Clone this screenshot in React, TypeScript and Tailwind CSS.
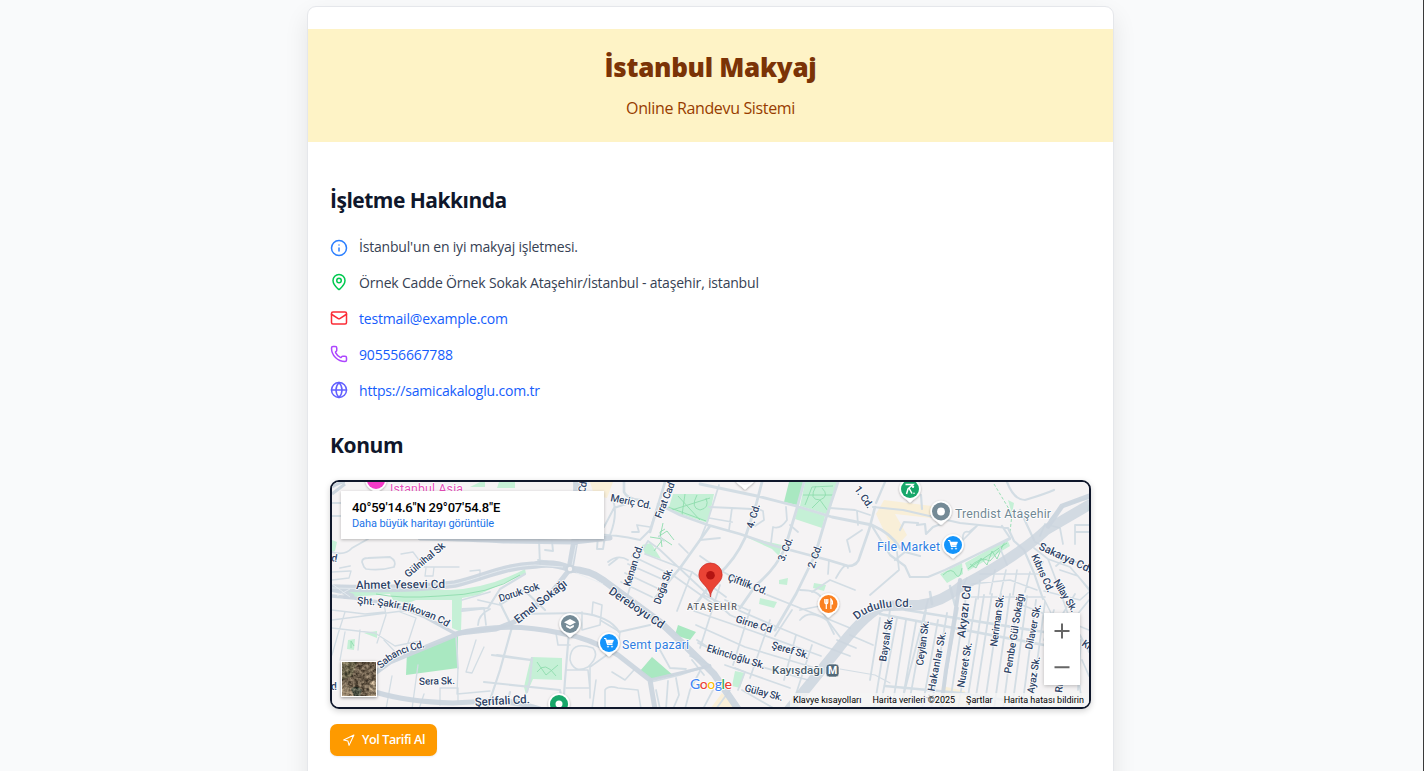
import React from "react";
import { Info, MapPin, Mail, Phone, Globe, Navigation } from "lucide-react";

type Road = { d: string; w: number; c?: string };

const MAIN = "#cbd5de";
const ROAD = "#d3dde4";

const roads: Road[] = [
  // left side
  { d: "M332 503H345M332 516H345M332 552Q345 556 352 548L368 539", w: 2 },
  { d: "M340 568L350 566M364 567L362 562Q362 558 368 558L390 557Q397 561 394 567Q380 571 366 569Z", w: 2 },
  { d: "M332 572L350 571M332 580L349 578L351 571M401 554L413 552L419 560M424 567L459 567M426 568L425 576L433 576L434 567M470 571L480 570V580", w: 1.5 },
  { d: "M332 610L365 614L385 612M332 628L375 633M345 612L338 634L332 655M384 604L386 615L377 643M332 620L410 610M400 612L416 618L405 652M360 630L358 650M375 633L395 646L420 641M345 632L340 660", w: 1.5 },
  { d: "M384 640L398 655M392 676L386 709M418 665L412 709M424 694L419 709M440 688V705M440 688L458 688V703M458 668L457 694L490 691M476 640L466 672L472 673L484 647", w: 1.5 },
  { d: "M456 634L458 668M462 609L484 608L486 625M462 600L490 592M490 609Q478 615 478 625M478 600L500 605L524 590", w: 2 },
  { d: "M525 574L500 589L488 608L462 611", w: 2.5 },
  { d: "M500 603L512 627M524 590L545 610M520 614L580 613Q610 616 619 632L650 625", w: 2.5 },
  { d: "M497 655L532 660M512 627L500 670L487 709M484 682L560 690L563 709M532 658L530 680L527 692M569 632L565 680L563 709M492 655L530 660M510 692L508 700L520 700", w: 2.5 },
  { d: "M593 648Q570 640 570 660Q574 674 588 667Q600 656 593 648M566 670H588L590 690M566 688H590M590 698V667L611 652M596 680L592 709M605 709V690Q608 685 618 688L638 690L641 709M612 672L625 680L634 670", w: 1.8 },
  { d: "M582 612V630L600 625L602 605L593 602L592 614M600 620L620 632L619 640L607 650M556 633L558 645H570", w: 1.8 },
  { d: "M651 682L680 675L710 665M660 709L656 690M668 681L666 709M676 678L679 695L673 709M700 671L690 690L685 709M660 650L670 668L686 669", w: 2 },
  // center
  { d: "M574 482L577 540M539 540L540 565M545 550L553 551L552 541M538 560L548 562M577 535Q610 533 640 540L650 530L658 505M605 536L603 549H597L598 535M604 527L614 508L632 502M610 535Q618 515 613 500", w: 2.2 },
  { d: "M648 541L659 549L692 580L730 615L760 628M648 541L640 554L625 604M632 556L674 576M628 564L664 580M625 573L659 589M621 582L652 597M645 554L692 572L677 611M608 562Q618 554 628 560M609 565L618 558M659 536L664 541M679 544L688 553M650 527L637 525L639 532L632 532", w: 2 },
  { d: "M624 482V492Q627 499 640 500M658 504L680 515L708 525L740 534L775 546L828 560L848 566Q858 566 860 556L869 530L875 507M710 526L680 568L655 598M665 482L650 532", w: 3 },
  { d: "M700 484L757 496L796 506L832 517L872 525Q892 534 900 548M762 482L756 505L745 538Q735 560 718 575L692 609M804 482L797 508L785 548Q775 570 756 585L740 608M838 482L826 518L815 555L796 594L775 630", w: 3.2 },
  { d: "M719 485L708 520L700 540M709 507L732 508L752 509M732 508L729 530M709 518L732 522M700 540L720 538M756 508L763 511L764 520L755 526M786 507L787 520Q780 530 773 527L771 543M790 525L798 532M830 508L855 510L870 515M857 511L858 525M862 530L847 540L850 552M829 560L828 574M836 578Q846 560 848 568M812 592L830 580L855 590M870 595L899 570L897 552", w: 2 },
  { d: "M700 556L720 570L755 590L800 608L828 619L850 628M692 572L726 597M703 595L775 626L826 647L850 656M694 611L755 632L821 656M696 625L745 647L812 667M698 643L730 658L808 680M674 576L722 610M720 585L700 648M750 610L733 665M770 620L750 678M792 610L775 636M800 610L820 606L834 634M796 635L784 680M812 645L795 697M725 665L790 688M748 610L725 600", w: 2 },
  { d: "M709 648L697 640M704 675L692 660M710 665L690 656M713 690L703 709M730 690L716 709M735 668L745 672L738 690M742 690L775 709", w: 2 },
  { d: "M800 620Q810 608 828 621L840 637M850 635L873 645M837 640L856 648M800 590Q820 590 822 600", w: 2 },
  // right
  { d: "M873 507L903 510L960 523L1008 528L1014 541L1024 550L1034 573L1043 599M876 503L885 482M872 526L890 555L905 566L910 577L928 577L945 570L980 553L1010 539M917 525L925 524L926 534L933 527L941 524M921 495L922 509M900 530L904 522L918 523M895 560L905 552L920 556M1002 526L1010 538L950 568M1007 482Q1014 500 1025 500Q1045 494 1054 490M1050 520L1065 504L1089 498M1034 540L1020 510", w: 2.5 },
  { d: "M963 540L978 525L969 532Q962 530 963 540M1000 548L1007 565M1034 548L1048 559L1070 567L1090 590M1035 542L1065 556L1090 570M1040 536L1045 524L1060 528L1063 544M1075 544V525H1089M1075 532H1089M1048 559L1059 588L1070 620L1083 709M1060 570L1078 576L1089 590M1043 562L1037 570M1056 566L1067 557", w: 2 },
  { d: "M980 574L1040 574M972 584L1010 580L1037 590M995 570L990 594M1006 570L1000 596M1017 570L1013 595M1030 572L1025 592M967 578L958 595M980 580L978 599M968 597H1045M1022 605L1060 620M1044 599L1052 615L1089 630M1044 591L1080 600L1089 592", w: 1.8 },
  { d: "M880 614L1044 645M885 686L960 693L1044 706M890 602L906 610L956 618L1044 632M930 592L932 604M950 586L955 605", w: 3 },
  { d: "M928 600L900 709M906 620L892 709M897 618L880 709M916 622L901 709M926 610L908 709M938 620L922 709M947 613L931 709M958 608L940 709M967 590L949 709M976 599L958 709M984 595L966 709M992 594L974 709M1001 594L984 709M1010 594L994 709M1018 596L1003 709M1027 596L1012 709M1036 600L1022 709M1045 602L1031 709M890 610L874 709M880 618L870 680", w: 2.1 },
  { d: "M840 669L875 675L890 683M861 706L890 706", w: 1.2 },
  { d: "M1054 610L1044 640M1062 615L1075 594M1072 621L1089 600M1080 635L1089 652M1082 660L1089 676M1081 640L1078 690", w: 2 },
];

const arteries: Road[] = [
  { d: "M332 588Q410 590 455 584C485 577 500 567 535 565Q555 562 570 569", w: 7.5 },
  { d: "M332 596L354 598Q395 603 425 617L456 634", w: 3.5 },
  { d: "M332 590Q365 597 345 597", w: 4 },
  { d: "M420 538Q475 539 504 541L574 542L610 538", w: 5 },
  { d: "M577 482L575 540L570 569Q590 570 603 580L660 622Q690 650 714 674L738 709", w: 7 },
  { d: "M570 569L548 597L514 622L496 629L460 633L390 662L375 673", w: 5 },
  { d: "M456 634Q505 621 560 633Q590 638 618 655L650 680L655 709", w: 5 },
  { d: "M650 680L710 666", w: 3 },
  { d: "M375 692Q408 702 453 703L490 701Q525 703 540 709", w: 5 },
  { d: "M788 711L835 653Q862 617 882 606L920 605Q942 602 960 587Q1020 555 1046 530L1089 505", w: 10.5 },
  { d: "M960 580L955 615L946 670L941 709", w: 4 },
  { d: "M1048 526L1062 506L1089 496", w: 5 },
];

type Lbl = { t: string; x1: number; y1: number; x2: number; y2: number; s?: number; c?: string; wt?: number };

const labels: Lbl[] = [
  { t: "Meriç Cd.", x1: 610, y1: 501, x2: 651, y2: 509 },
  { t: "Fırat Cad", x1: 661, y1: 519, x2: 675, y2: 484 },
  { t: "Cd", x1: 585, y1: 493, x2: 587, y2: 482 },
  { t: "Kenan Cd.", x1: 630, y1: 587, x2: 643, y2: 546 },
  { t: "Doğa Sk.", x1: 660, y1: 605, x2: 673, y2: 569 },
  { t: "Dereboyu Cd", x1: 608, y1: 593, x2: 661, y2: 629, s: 11.5 },
  { t: "Emel Sokağı", x1: 518, y1: 624, x2: 568, y2: 585, s: 11.5 },
  { t: "Doruk Sok", x1: 500, y1: 602, x2: 540, y2: 589 },
  { t: "Gülnihal Sk", x1: 408, y1: 578, x2: 446, y2: 547 },
  { t: "Ahmet Yesevi Cd", x1: 356, y1: 589, x2: 445, y2: 588, s: 11.7 },
  { t: "Sera Sk.", x1: 419, y1: 685, x2: 455, y2: 684 },
  { t: "Şerifali Cd.", x1: 475, y1: 706, x2: 530, y2: 703, s: 11.7 },
  { t: "4. Cd.", x1: 753, y1: 529, x2: 760, y2: 505 },
  { t: "3. Cd.", x1: 784, y1: 562, x2: 793, y2: 539 },
  { t: "2. Cd.", x1: 814, y1: 569, x2: 822, y2: 546 },
  { t: "1. Cd.", x1: 854, y1: 489, x2: 868, y2: 509 },
  { t: "Çiftlik Cd.", x1: 727, y1: 580, x2: 766, y2: 595 },
  { t: "Girne Cd", x1: 735, y1: 622, x2: 771, y2: 633 },
  { t: "Şeref Sk.", x1: 771, y1: 648, x2: 808, y2: 659 },
  { t: "Ekincioğlu Sk.", x1: 706, y1: 651, x2: 764, y2: 669 },
  { t: "Gülay Sk.", x1: 744, y1: 691, x2: 782, y2: 701 },
  { t: "Kayışdağı", x1: 772, y1: 674, x2: 823, y2: 674, s: 11.7, c: "#4a5d6d" },
  { t: "Baysal Sk.", x1: 886, y1: 662, x2: 893, y2: 617 },
  { t: "Ceylan Sk.", x1: 923, y1: 666, x2: 929, y2: 621 },
  { t: "k Hakanlar Sk.", x1: 933, y1: 700, x2: 946, y2: 632 },
  { t: "Akyazı Cd", x1: 965, y1: 638, x2: 971, y2: 586, s: 11.5 },
  { t: "Nusret Sk.", x1: 964, y1: 688, x2: 972, y2: 643 },
  { t: "Neriman Sk.", x1: 997, y1: 647, x2: 1004, y2: 595 },
  { t: "Pembe Gül Sokağı", x1: 1011, y1: 674, x2: 1024, y2: 594 },
  { t: "Dilaver Sk.", x1: 1032, y1: 650, x2: 1041, y2: 605 },
  { t: "Ayaz Sk.", x1: 1034, y1: 694, x2: 1040, y2: 657 },
  { t: "Ri", x1: 1062, y1: 693, x2: 1063, y2: 684 },
  { t: "Sakarya Cd.", x1: 1038, y1: 549, x2: 1090, y2: 573, s: 11 },
  { t: "Kıbrıs Cd.", x1: 1031, y1: 556, x2: 1048, y2: 593 },
  { t: "Nilay Sk.", x1: 1053, y1: 582, x2: 1072, y2: 613 },
  { t: "Kı", x1: 1081, y1: 645, x2: 1088, y2: 650 },
  { t: "d.", x1: 331, y1: 561, x2: 337, y2: 562 },
  { t: "d.", x1: 331, y1: 690, x2: 337, y2: 690 },
  { t: "Semt pazari", x1: 622, y1: 649, x2: 689, y2: 649, s: 12.3, c: "#2f7de1", wt: 400 },
  { t: "File Market", x1: 877, y1: 551, x2: 940, y2: 551, s: 12.3, c: "#2f7de1", wt: 400 },
  { t: "Trendist Ataşehir", x1: 955, y1: 518, x2: 1051, y2: 518, s: 12.3, c: "#718794", wt: 400 },
  { t: "Istanbul Asia", x1: 390, y1: 493, x2: 463, y2: 493, s: 12.3, c: "#e84fbb", wt: 400 },
  { t: "ATAŞEHİR", x1: 687, y1: 610, x2: 737, y2: 610, s: 9, c: "#5f6368", wt: 500 },
];

function Label({ t, x1, y1, x2, y2, s = 10.2, c = "#2f4467", wt = 500 }: Lbl) {
  const len = Math.hypot(x2 - x1, y2 - y1);
  const rot = (Math.atan2(y2 - y1, x2 - x1) * 180) / Math.PI;
  return (
    <text
      transform={`translate(${x1} ${y1}) rotate(${rot})`}
      fontSize={s}
      fontWeight={wt}
      fill={c}
      stroke="#ffffff"
      strokeWidth={1.6}
      strokeLinejoin="round"
      paintOrder="stroke"
      textLength={len}
    >
      {t}
    </text>
  );
}

function Pin({ x, y, c, children }: { x: number; y: number; c: string; children?: React.ReactNode }) {
  return (
    <g transform={`translate(${x} ${y})`}>
      <path d="M0 13.5C-1.5 13-2.3 11-5 9.4A10.7 10.7 0 1 1 5 9.4C2.3 11 1.5 13 0 13.5Z" fill="#fff" filter="url(#pinShadow)" />
      <circle r="9" fill={c} />
      {children}
    </g>
  );
}

function Cart() {
  return (
    <g stroke="#fff" fill="none" strokeWidth="1.2">
      <path d="M-5-4.5H-3.3L-1.5 1.3H3.5" />
      <path d="M-2.8-3H4.6L3.3.3H-1.8Z" fill="#fff" strokeWidth=".5" />
      <circle cx="-1" cy="3.6" r=".7" fill="#fff" strokeWidth=".5" />
      <circle cx="3" cy="3.6" r=".7" fill="#fff" strokeWidth=".5" />
    </g>
  );
}

function MapCanvas() {
  return (
    <svg width="757" height="225" viewBox="332 482 757 225" className="block" fontFamily="Roboto, sans-serif">
      <defs>
        <filter id="pinShadow" x="-30%" y="-30%" width="160%" height="160%">
          <feDropShadow dx="0" dy="0.8" stdDeviation="0.9" floodColor="#000" floodOpacity="0.35" />
        </filter>
        <path id="sakir" d="M357 604Q412 606 447 627" />
        <path id="sabanci" d="M381 669Q397 652 427 647" />
        <path id="dudullu" d="M857 620Q873 605 911 607" />
      </defs>
      <rect x="332" y="482" width="757" height="225" fill="#f5f3f4" />
      <g fill="#f9efd8">
        <path d="M590 482H613L607 498L594 495Z" />
        <path d="M884 500L932 506L931 518L895 514L907 535L893 550L876 514Z" />
        <path d="M722 693L738 709H710Z" />
        <path d="M942 686L965 691L963 709H938Z" />
      </g>
      <g fill="#c5f0d6">
        <path d="M347 590L450 590Q490 588 525 569L526 574Q500 584 478 595L462 598L461 632L452 628V600L416 600L408 603L393 600L390 594L352 597Z" />
        <path d="M531 657L562 658V680L533 679L526 695L524 687Z" />
        <path d="M364 633L377 631V638ZM348 640L355 639L354 650L347 649Z" />
        <path d="M673 494H714L708 523L668 510Z" />
        <path d="M805 482H837L829 515L800 506ZM798 507L825 516L822 528L795 519Z" />
        <path d="M746 537L782 545L779 556L772 549Z" />
        <path d="M642 545L651 543L661 559L645 554ZM779 580L788 578L787 585L779 584ZM814 583L826 585L824 591L813 588Z" />
        <path d="M940 574L962 563L963 574L947 583ZM965 563L1007 539L1010 546L968 571Z" />
        <path d="M760 598L777 602L774 608L759 604ZM735 671L745 673L740 688L732 686Z" />
        <path d="M1008 500L1014 503L1012 514ZM480 482H485V487H470ZM499 482H515V488H497ZM1088 505H1091V511H1087ZM332 540L337 542L335 551L332 552Z" />
      </g>
      <g fill="#a9e8c1">
        <path d="M407 652L458 636V668L406 675Z" />
        <path d="M789 482H804L797 505L784 502Z" />
        <path d="M652 657L674 676L651 679L640 671ZM678 625L696 632L690 640L675 635Z" />
      </g>
      <g fill="none" stroke="#8fdcae" strokeWidth="0.9">
        <path d="M678 496L700 520M672 510L710 498M685 494L682 515M697 495Q690 508 700 510Q710 508 706 498M668 507L706 521M663 523L660 537L672 545M658 537L667 531L674 540" />
        <path d="M805 505L812 487L833 486M803 495H834M816 486Q808 500 820 500Q830 496 822 488M812 508L820 500L828 511M650 537L663 539L654 551M662 547L660 532L665 529" />
        <path d="M943 575Q952 566 956 575Q960 580 962 568M969 568L1007 543M970 564L976 568L981 558L987 565L992 551L997 559L1003 545M968 569Q980 555 990 561Q1002 548 1006 540" />
        <path d="M537 662L546 675L558 665M537 672Q545 660 556 676M376 594Q400 599 440 596Q490 595 520 575M351 648V641L354 646" />
        <path d="M994 484L1012 514L1010 532" strokeDasharray="3 2" />
      </g>
      <g fill="none" stroke={ROAD} strokeLinejoin="round" strokeLinecap="round">
        {roads.map((r, i) => (
          <path key={i} d={r.d} strokeWidth={r.w * 0.88} />
        ))}
      </g>
      <g fill="none" stroke={MAIN} strokeLinejoin="round" strokeLinecap="round">
        {arteries.map((r, i) => (
          <path key={i} d={r.d} strokeWidth={r.w} strokeOpacity={r.w > 8 ? 0.85 : 0.95} />
        ))}
      </g>
      <g fill="none" stroke="#e8edf1" strokeWidth="0.8">
        <path d="M332 588Q410 590 455 584C485 577 500 567 535 565L563 567M576 545L572 565M576 573L603 584M332 584L350 597M337 596L350 589" />
      </g>
      <circle cx="570" cy="569" r="3.4" fill="#f5f3f4" stroke={MAIN} strokeWidth="2.4" />
      <path d="M332 487Q340 482 345 482M332 494L345 484" stroke={MAIN} strokeWidth="3" fill="none" />
      {labels.map((l, i) => (
        <Label key={i} {...l} />
      ))}
      <g fontSize="10.2" fontWeight="500" fill="#2f4467" stroke="#fff" strokeWidth="1.6" paintOrder="stroke">
        <text><textPath href="#sakir" textLength="94">Şht. Şakir Elkovan Cd</textPath></text>
        <text><textPath href="#sabanci" textLength="50">Sabancı Cd.</textPath></text>
        <text fontSize="11.2"><textPath href="#dudullu" textLength="58">Dudullu Cd.</textPath></text>
      </g>
      <rect x="826" y="664" width="13" height="13" rx="3.5" fill="#526878" stroke="#fff" strokeWidth=".6" />
      <text x="832.5" y="674.3" textAnchor="middle" fontSize="10.5" fontWeight="700" fill="#fff">M</text>

      <Pin x={376} y={480} c="#f53bc8" />
      <Pin x={745} y={476} c="#f5f3f4" />
      <Pin x={570} y={624} c="#748a96">
        <path d="M-6-1.7L0-5L6-1.7L0 1.5ZM-3.8.7L0 2.8L3.8.7V3L0 5L-3.8 3Z" fill="#fff" />
      </Pin>
      <Pin x={609} y={643} c="#1494fb"><Cart /></Pin>
      <Pin x={953} y={545} c="#1494fb"><Cart /></Pin>
      <Pin x={828.5} y={604} c="#fb8020">
        <path d="M-3.7-5V-2Q-3.7 0-2.2 0V5M-2.2-5V0M-.7-5V-2Q-.7 0-2.2 0M2.4 5V-5Q4.2-3.5 4 0H2.4" stroke="#fff" strokeWidth="1.2" fill="none" />
      </Pin>
      <Pin x={941} y={511.5} c="#748a96"><circle r="3.9" fill="#fff" /></Pin>
      <Pin x={910} y={489} c="#17a76a">
        <path d="M-4.5-4.5H3L-2 0L-3.5 5M-1-1L2 4.5" stroke="#fff" strokeWidth="1.5" fill="none" />
        <circle cx="3" cy="-2.3" r="1.2" fill="#fff" />
        <circle cx="4" cy="4.3" r=".8" fill="#fff" />
      </Pin>
      <Pin x={559} y={704} c="#17a76a"><circle r="3.5" fill="#fff" /></Pin>

      <path d="M710.5 597C709.7 586 698.8 583.5 698.8 574.7A11.7 11.7 0 0 1 722.2 574.7C722.2 583.5 711.3 586 710.5 597Z" fill="#ea4335" stroke="#c5221f" strokeWidth=".6" />
      <circle cx="710.5" cy="575.3" r="4.3" fill="#b31412" />

      <g fontSize="14.2" fontWeight="500" stroke="#fff" strokeWidth="1.6" paintOrder="stroke" fontFamily="Lato, sans-serif">
        <text x="690" y="689" textLength="42">
          <tspan fill="#4285f4">G</tspan><tspan fill="#ea4335">o</tspan><tspan fill="#fbbc04">o</tspan><tspan fill="#4285f4">g</tspan><tspan fill="#34a853">l</tspan><tspan fill="#ea4335">e</tspan>
        </text>
      </g>
    </svg>
  );
}

function Satellite() {
  return (
    <svg width="34" height="34" viewBox="0 0 34 34" className="block">
      <filter id="ground" x="0" y="0" width="100%" height="100%" colorInterpolationFilters="sRGB">
        <feTurbulence type="fractalNoise" baseFrequency="0.3" numOctaves="4" seed="8" />
        <feColorMatrix values="1.5 0 0 0 -0.35  1.4 0 0 0 -0.35  1.25 0 0 0 -0.33  0 0 0 0 1" />
      </filter>
      <rect width="34" height="34" fill="#75654f" />
      <path d="M0 0H15L10 14L0 18Z" fill="#727350" />
      <path d="M0 22L9 24L14 34H0ZM28 20L34 18V34H26Z" fill="#cdb795" />
      <path d="M9 27Q14 22 20 28L18 34H12Z" fill="#2b4236" />
      <rect width="34" height="34" filter="url(#ground)" opacity=".5" />
    </svg>
  );
}

function LocationMap() {
  return (
    <div className="relative mt-[20px] h-[229px] overflow-hidden rounded-[9px] border-2 border-[#0f172b] font-[Roboto,sans-serif] shadow-[0_2px_6px_rgba(0,0,0,0.18)]">
      <MapCanvas />
      <div className="absolute left-[9px] top-[9px] h-[48px] w-[263px] bg-white pl-[11px] pt-[9px] shadow-[0_1px_3px_rgba(0,0,0,0.25)]">
        <div className="whitespace-nowrap text-[13px] font-medium leading-[16px] tracking-[-0.2px] text-black">40°59'14.6"N 29°07'54.8"E</div>
        <div className="whitespace-nowrap text-[11px] leading-[15px] tracking-[-0.1px] text-[#1a73e8]">Daha büyük haritayı görüntüle</div>
      </div>
      <div className="absolute left-[9px] top-[179px] h-[36px] w-[36px] overflow-hidden border border-white shadow-[0_1px_3px_rgba(0,0,0,0.4)]">
        <Satellite />
      </div>
      <div className="absolute left-[712px] top-[131px] flex h-[72px] w-[36px] flex-col items-center bg-white shadow-[0_1px_4px_rgba(0,0,0,0.25)]">
        <svg width="36" height="72" viewBox="0 0 36 72" stroke="#666" strokeWidth="2">
          <path d="M10.5 18H25.5M18 10.5V25.5M10.5 54.3H25.5" />
        </svg>
      </div>
      <div className="absolute bottom-0 right-0 flex h-[14px] items-center gap-[11px] whitespace-nowrap bg-[#f5f5f5]/80 pl-[3px] pr-[5px] pt-px text-[9px] leading-[13px] text-black">
        <span>Klavye kısayolları</span>
        <span>Harita verileri ©2025</span>
        <span>Şartlar</span>
        <span>Harita hatası bildirin</span>
      </div>
    </div>
  );
}

const link = "text-[#155dfc]";

export default function App() {
  return (
    <div className="flex h-[771px] justify-center overflow-hidden border-r border-[#3a3a3a] bg-[#f9fafb] pr-[2px] font-['Open_Sans','Noto_Sans',sans-serif]">
      <main className="mt-[6px] h-[900px] w-[807px] shrink-0 rounded-[9px] border border-[#e5e7eb] bg-white pt-[22px] shadow-[0_10px_24px_rgba(0,0,0,0.09)]">
        <header className="flex h-[113px] flex-col items-center bg-[#fef3c6] pt-[22px]">
          <h1 className="text-[26px] font-extrabold leading-[32px] tracking-[-0.3px] text-[#7b3306]">İstanbul Makyaj</h1>
          <p className="mt-[13px] text-[16px] leading-[24px] tracking-[-0.35px] text-[#973c00]">Online Randevu Sistemi</p>
        </header>
        <section className="px-[22px] pt-[43px]">
          <h2 className="text-[21px] font-bold leading-[30px] tracking-[-0.5px] text-[#0f172b]">İşletme Hakkında</h2>
          <ul className="mt-[21px] flex flex-col gap-[14px] text-[14px] leading-[22px] tracking-[-0.19px] text-[#364153]">
            <li className="flex items-center gap-[11px]">
              <Info size={18} strokeWidth={2} className="relative top-px text-[#2b7fff]" />
              <span>İstanbul'un en iyi makyaj işletmesi.</span>
            </li>
            <li className="flex items-center gap-[11px]">
              <MapPin size={18} className="relative -top-px text-[#00c950]" />
              <span>Örnek Cadde Örnek Sokak Ataşehir/İstanbul - ataşehir, istanbul</span>
            </li>
            <li className="flex items-center gap-[11px]">
              <Mail size={18} className="relative -top-px text-[#fb2c36]" />
              <a className={link}>testmail@example.com</a>
            </li>
            <li className="flex items-center gap-[11px]">
              <Phone size={18} className="relative -top-px text-[#ad46ff]" />
              <a className={link}>905556667788</a>
            </li>
            <li className="flex items-center gap-[11px]">
              <Globe size={18} className="relative -top-px text-[#615fff]" />
              <a className={link}>https://samicakaloglu.com.tr</a>
            </li>
          </ul>
          <h2 className="mt-[28px] text-[21px] font-bold leading-[30px] tracking-[-0.4px] text-[#0f172b]">Konum</h2>
          <LocationMap />
          <button className="mt-[15px] flex h-[32px] w-[107px] items-center gap-[7px] rounded-[7px] bg-[#fe9a00] pl-[12px] text-[12.6px] font-semibold tracking-[-0.42px] text-white shadow-[0_1px_2px_rgba(0,0,0,0.08)]">
            <Navigation size={13} className="shrink-0" />
            <span className="whitespace-nowrap pt-px">Yol Tarifi Al</span>
          </button>
        </section>
      </main>
    </div>
  );
}
